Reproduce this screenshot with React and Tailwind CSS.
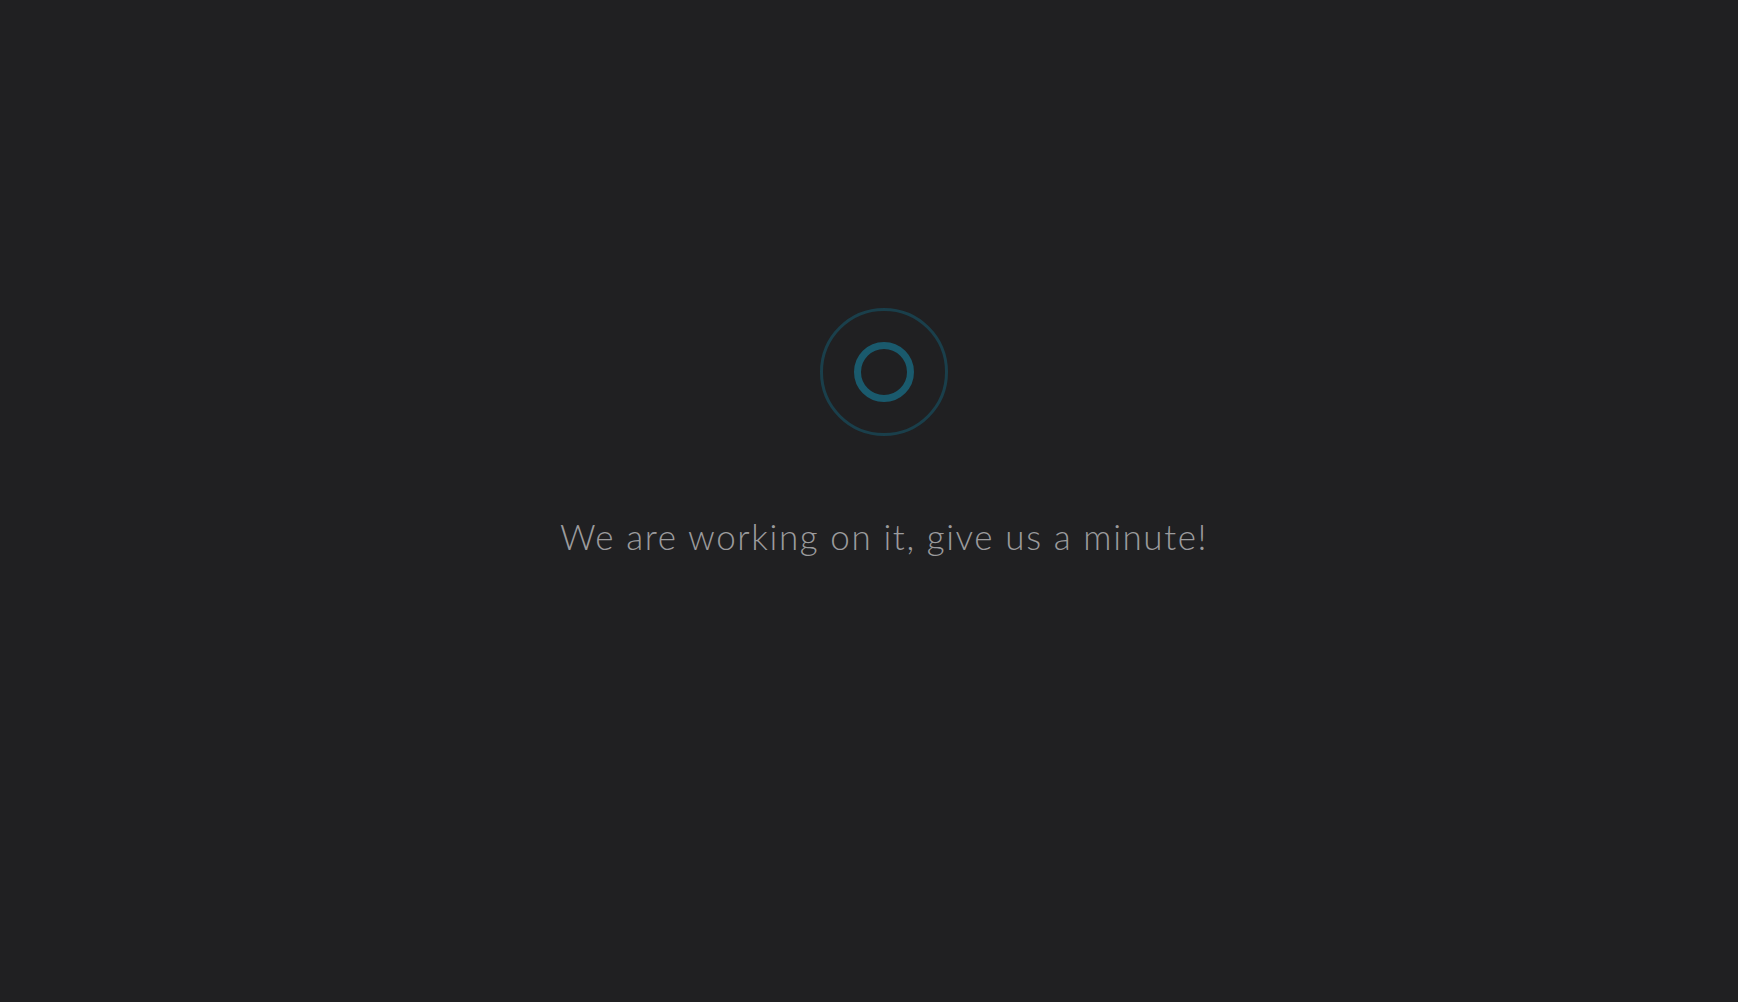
export default function App() {
  return (
    <main className="min-h-screen w-full bg-[#202022] flex flex-col items-center pt-[308px] pl-[30px]">
      <div className="w-[128px] h-[128px] rounded-full border-[3px] border-[#1a3f4b] flex items-center justify-center">
        <div className="w-[60px] h-[60px] rounded-full border-[7px] border-[#1a5a6d]" />
      </div>
      <p className="mt-[78px] text-[35px] leading-[44px] font-light text-[#9b9b9d] tracking-[1.6px] font-['Lato','Noto_Sans',sans-serif]">
        We are working on it, give us a minute!
      </p>
    </main>
  );
}
